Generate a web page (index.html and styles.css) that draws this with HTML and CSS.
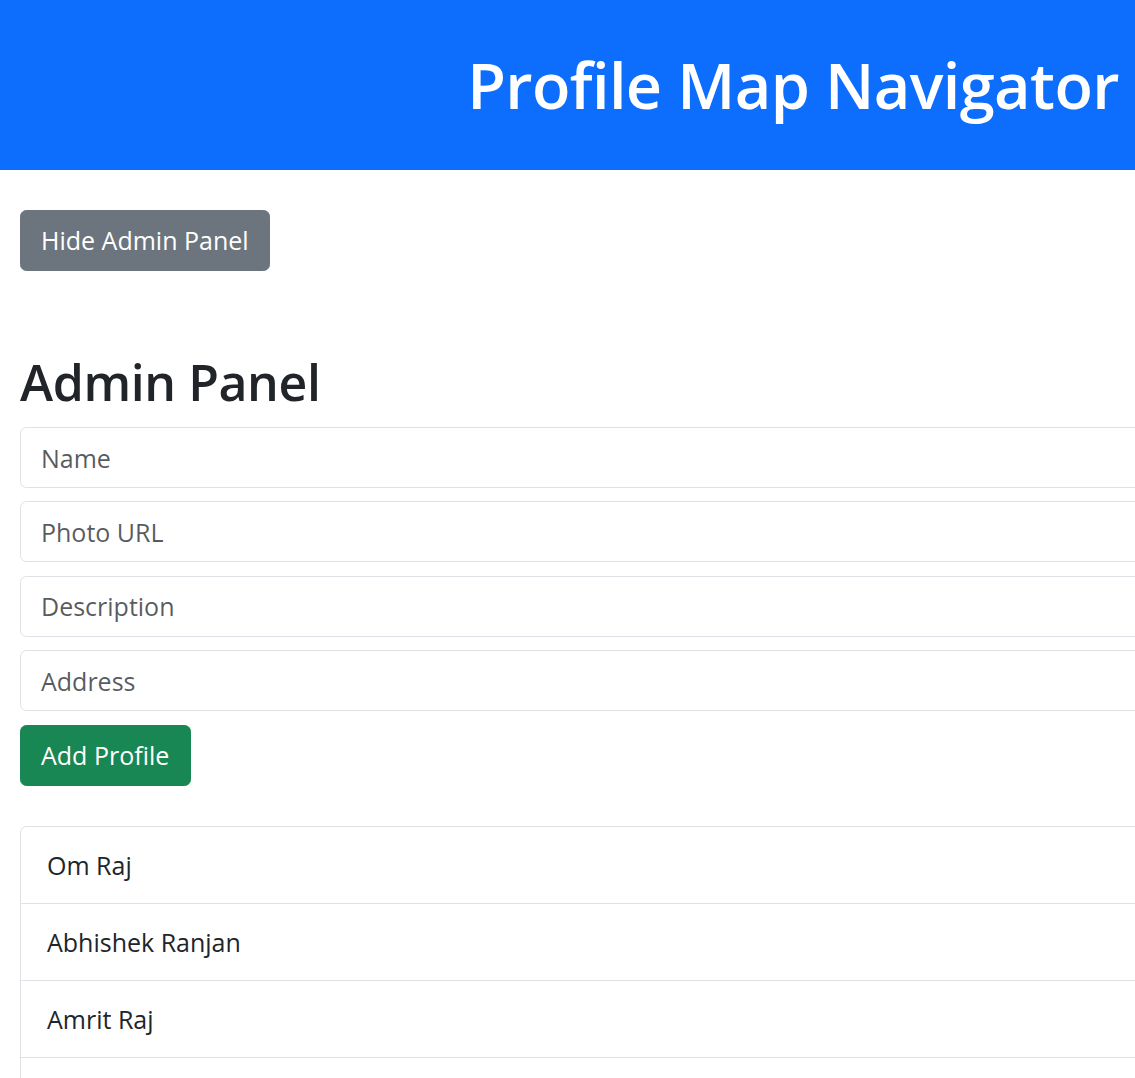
FILE: index.html
```html
<!DOCTYPE html>
<html lang="en">
<head>
<meta charset="utf-8">
<title>Profile Map Navigator</title>
<link rel="stylesheet" href="styles.css">
</head>
<body>
<div class="app">
  <header class="topbar">
    <h1 class="title">Profile Map Navigator</h1>
  </header>
  <main class="content">
    <button class="btn btn-secondary toggle" type="button">Hide Admin Panel</button>
    <section class="admin">
      <h2 class="admin-title">Admin Panel</h2>
      <form class="admin-form">
        <input class="field" type="text" placeholder="Name">
        <input class="field" type="text" placeholder="Photo URL">
        <input class="field" type="text" placeholder="Description">
        <input class="field" type="text" placeholder="Address">
        <div class="actions">
          <button class="btn btn-success" type="button">Add Profile</button>
        </div>
      </form>
      <ul class="profile-list">
        <li class="profile-item">Om Raj</li>
        <li class="profile-item">Abhishek Ranjan</li>
        <li class="profile-item">Amrit Raj</li>
        <li class="profile-item">&nbsp;</li>
      </ul>
    </section>
  </main>
</div>
</body>
</html>
```
FILE: styles.css
```css
html {
  overflow: hidden;
}
body {
  margin: 0;
  font-family: "Open Sans", "Noto Sans", "Liberation Sans", sans-serif;
  font-size: 25px;
  line-height: 1.5;
  color: #212529;
  background: #fff;
}
.app {
  width: 1586px;
}
.topbar {
  height: 170px;
  background: #0d6efd;
  color: #fff;
  display: flex;
  align-items: center;
  justify-content: center;
}
.title {
  margin: 0;
  font-size: 63px;
  font-weight: 600;
  letter-spacing: -0.6px;
  line-height: 1.2;
}
.content {
  padding: 40px 20px 0;
}
.btn {
  display: inline-flex;
  align-items: center;
  height: 61px;
  padding: 1px 20px 0;
  border: 1px solid transparent;
  border-radius: 6.4px;
  font-family: inherit;
  font-size: 25px;
  line-height: 1.5;
  color: #fff;
  cursor: pointer;
}
.btn-secondary {
  background: #6c757d;
  border-color: #6c757d;
}
.btn-success {
  background: #198754;
  border-color: #198754;
  padding-right: 21px;
}
.admin-title {
  margin: 81px 0 14px;
  font-size: 50px;
  font-weight: 600;
  letter-spacing: -0.4px;
  line-height: 61px;
}
.admin-form {
  display: flex;
  flex-direction: column;
  gap: 13.4px;
}
.field {
  display: block;
  box-sizing: border-box;
  width: 100%;
  height: 61px;
  padding: 0 20px;
  border: 1px solid #dee2e6;
  border-radius: 6.4px;
  font-family: inherit;
  font-size: 25px;
  color: #212529;
  background: #fff;
}
.field::placeholder {
  color: rgba(33, 37, 41, 0.75);
}
.profile-list {
  list-style: none;
  margin: 40px 0 0;
  padding: 0;
  border: 1px solid #dee2e6;
  border-radius: 6.4px;
}
.profile-item {
  padding: 19px 26px;
  line-height: 38px;
  border-bottom: 1px solid #dee2e6;
}
```
